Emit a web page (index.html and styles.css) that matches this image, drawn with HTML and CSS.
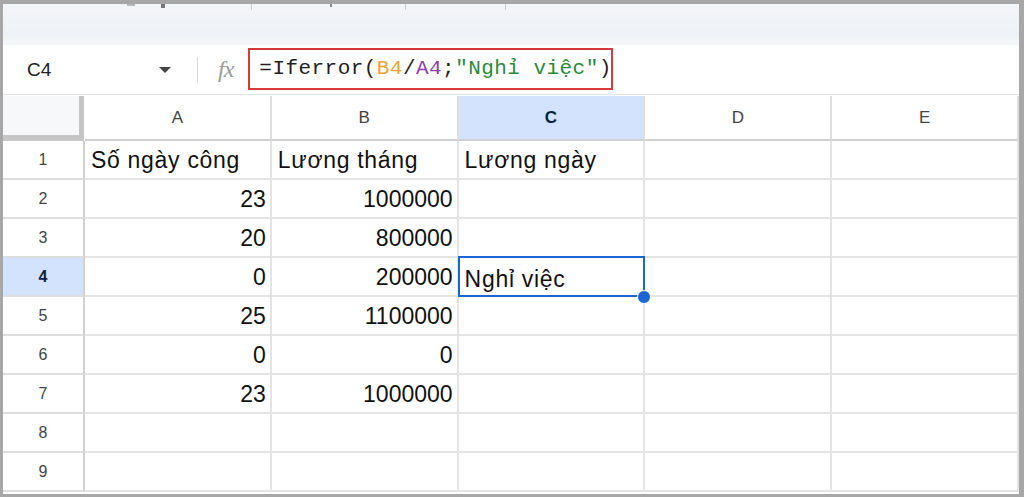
FILE: index.html
```html
<!DOCTYPE html>
<html lang="vi">
<head>
  <meta charset="UTF-8">
  <title>Iferror - Lương ngày</title>
  <link rel="stylesheet" href="styles.css">
</head>
<body>
  <div class="frame">
    <div class="toolbar">
      <span class="tick t1"></span>
      <span class="tick t2"></span>
      <span class="tick t3"></span>
      <span class="tick t4"></span>
      <span class="tick t5"></span>
      <span class="tick t6"></span>
    </div>

    <div class="formula-bar">
      <div class="name-box">
        <span class="cell-ref">C4</span>
        <span class="caret"></span>
      </div>
      <span class="divider"></span>
      <span class="fx">fx</span>
      <div class="formula">=Iferror(<span class="ref-b">B4</span>/<span class="ref-a">A4</span>;<span class="str">"Nghỉ việc"</span>)</div>
    </div>

    <div class="grid">
      <div class="corner"></div>
      <div class="col-head">A</div>
      <div class="col-head">B</div>
      <div class="col-head active">C</div>
      <div class="col-head">D</div>
      <div class="col-head">E</div>

      <div class="row-head">1</div>
      <div class="cell text">Số ngày công</div>
      <div class="cell text">Lương tháng</div>
      <div class="cell text">Lương ngày</div>
      <div class="cell"></div>
      <div class="cell"></div>

      <div class="row-head">2</div>
      <div class="cell num">23</div>
      <div class="cell num">1000000</div>
      <div class="cell"></div>
      <div class="cell"></div>
      <div class="cell"></div>

      <div class="row-head">3</div>
      <div class="cell num">20</div>
      <div class="cell num">800000</div>
      <div class="cell"></div>
      <div class="cell"></div>
      <div class="cell"></div>

      <div class="row-head active">4</div>
      <div class="cell num">0</div>
      <div class="cell num">200000</div>
      <div class="cell text selected">Nghỉ việc<span class="handle"></span></div>
      <div class="cell"></div>
      <div class="cell"></div>

      <div class="row-head">5</div>
      <div class="cell num">25</div>
      <div class="cell num">1100000</div>
      <div class="cell"></div>
      <div class="cell"></div>
      <div class="cell"></div>

      <div class="row-head">6</div>
      <div class="cell num">0</div>
      <div class="cell num">0</div>
      <div class="cell"></div>
      <div class="cell"></div>
      <div class="cell"></div>

      <div class="row-head">7</div>
      <div class="cell num">23</div>
      <div class="cell num">1000000</div>
      <div class="cell"></div>
      <div class="cell"></div>
      <div class="cell"></div>

      <div class="row-head">8</div>
      <div class="cell"></div>
      <div class="cell"></div>
      <div class="cell"></div>
      <div class="cell"></div>
      <div class="cell"></div>

      <div class="row-head">9</div>
      <div class="cell"></div>
      <div class="cell"></div>
      <div class="cell"></div>
      <div class="cell"></div>
      <div class="cell"></div>
    </div>
  </div>
</body>
</html>
```

FILE: styles.css
```css
html, body {
  margin: 0;
  height: 100%;
}
body {
  background: #a7a7a7;
  font-family: "Liberation Sans", Arial, sans-serif;
  color: #1f1f1f;
  overflow: hidden;
}
.frame {
  margin: 4px 5px 0 3px;
  height: 490px;
  background: #fff;
  overflow: hidden;
}

/* leftover of the toolbar above */
.toolbar {
  position: relative;
  height: 41px;
  background: linear-gradient(to bottom, #f3f5f8, #eef1f6 70%, #f6f7f9);
}
.tick {
  position: absolute;
  top: 0;
  width: 1px;
  height: 6px;
  background: #c9cbcf;
}
.t1 { left: 124px; width: 8px; height: 2px; background: #b5b7bb; }
.t2 { left: 158px; width: 4px; height: 4px; background: #777; }
.t3 { left: 248px; }
.t4 { left: 327px; width: 2px; height: 3px; background: #888; }
.t5 { left: 402px; }
.t6 { left: 502px; }

.formula-bar {
  display: flex;
  align-items: center;
  height: 49px;
  border-bottom: 1px solid #e3e3e3;
}
.name-box {
  display: flex;
  align-items: center;
  justify-content: space-between;
  width: 170px;
  padding-left: 24px;
  box-sizing: border-box;
}
.cell-ref {
  font-size: 19px;
  color: #202124;
}
.caret {
  width: 0;
  height: 0;
  border-left: 6px solid transparent;
  border-right: 6px solid transparent;
  border-top: 6px solid #444;
  margin-right: 2px;
}
.divider {
  width: 1px;
  height: 26px;
  background: #dadada;
  margin-left: 24px;
}
.fx {
  font-family: "Liberation Serif", "Times New Roman", serif;
  font-style: italic;
  font-size: 24px;
  color: #9a9a9a;
  margin-left: 20px;
  letter-spacing: -1px;
}
.formula {
  margin-left: 15px;
  margin-top: -2px;
  border: 2px solid #d63a3a;
  height: 42px;
  box-sizing: border-box;
  width: 365px;
  padding-left: 9px;
  display: flex;
  align-items: center;
  font-family: "Liberation Mono", "Courier New", monospace;
  font-size: 21px;
  letter-spacing: 0.45px;
  color: #1f1f1f;
  white-space: nowrap;
}
.ref-b { color: #f2a33a; }
.ref-a { color: #8a3fb0; }
.str { color: #2a8a3a; }

.grid {
  display: grid;
  grid-template-columns: 82px repeat(5, 1fr);
  grid-template-rows: 45px repeat(9, 39px);
  margin-top: 1px;
}
.corner {
  background: #f7f8fa;
  border-right: 5px solid #c6c6c6;
  border-bottom: 6px solid #c6c6c6;
  margin-right: 1px;
}
.col-head {
  display: flex;
  align-items: center;
  justify-content: center;
  font-size: 17px;
  color: #444;
  border-right: 2px solid #dedede;
  border-bottom: 2px solid #d0d0d0;
}
.col-head.active {
  background: #d3e3fd;
  color: #0b1e3f;
  font-weight: bold;
}
.row-head {
  display: flex;
  align-items: center;
  justify-content: center;
  font-size: 16px;
  color: #444;
  border-right: 2px solid #d0d0d0;
  border-bottom: 2px solid #dedede;
}
.row-head.active {
  background: #d3e3fd;
  color: #0b1e3f;
  font-weight: bold;
}
.cell {
  position: relative;
  display: flex;
  align-items: center;
  padding: 2px 4px 0 6px;
  font-size: 23px;
  color: #111;
  white-space: nowrap;
  border-right: 2px solid #e4e4e4;
  border-bottom: 2px solid #e4e4e4;
}
.cell.text {
  letter-spacing: 0.7px;
}
.cell.num {
  justify-content: flex-end;
}
.cell.selected {
  border: 2px solid #1a66d6;
  margin: -2px 0 0 -1px;
  padding: 5px 4px 0 5px;
}
.handle {
  position: absolute;
  right: -8px;
  bottom: -9px;
  width: 12px;
  height: 12px;
  border-radius: 50%;
  background: #1a66d6;
  border: 1px solid #fff;
  z-index: 2;
}
```
